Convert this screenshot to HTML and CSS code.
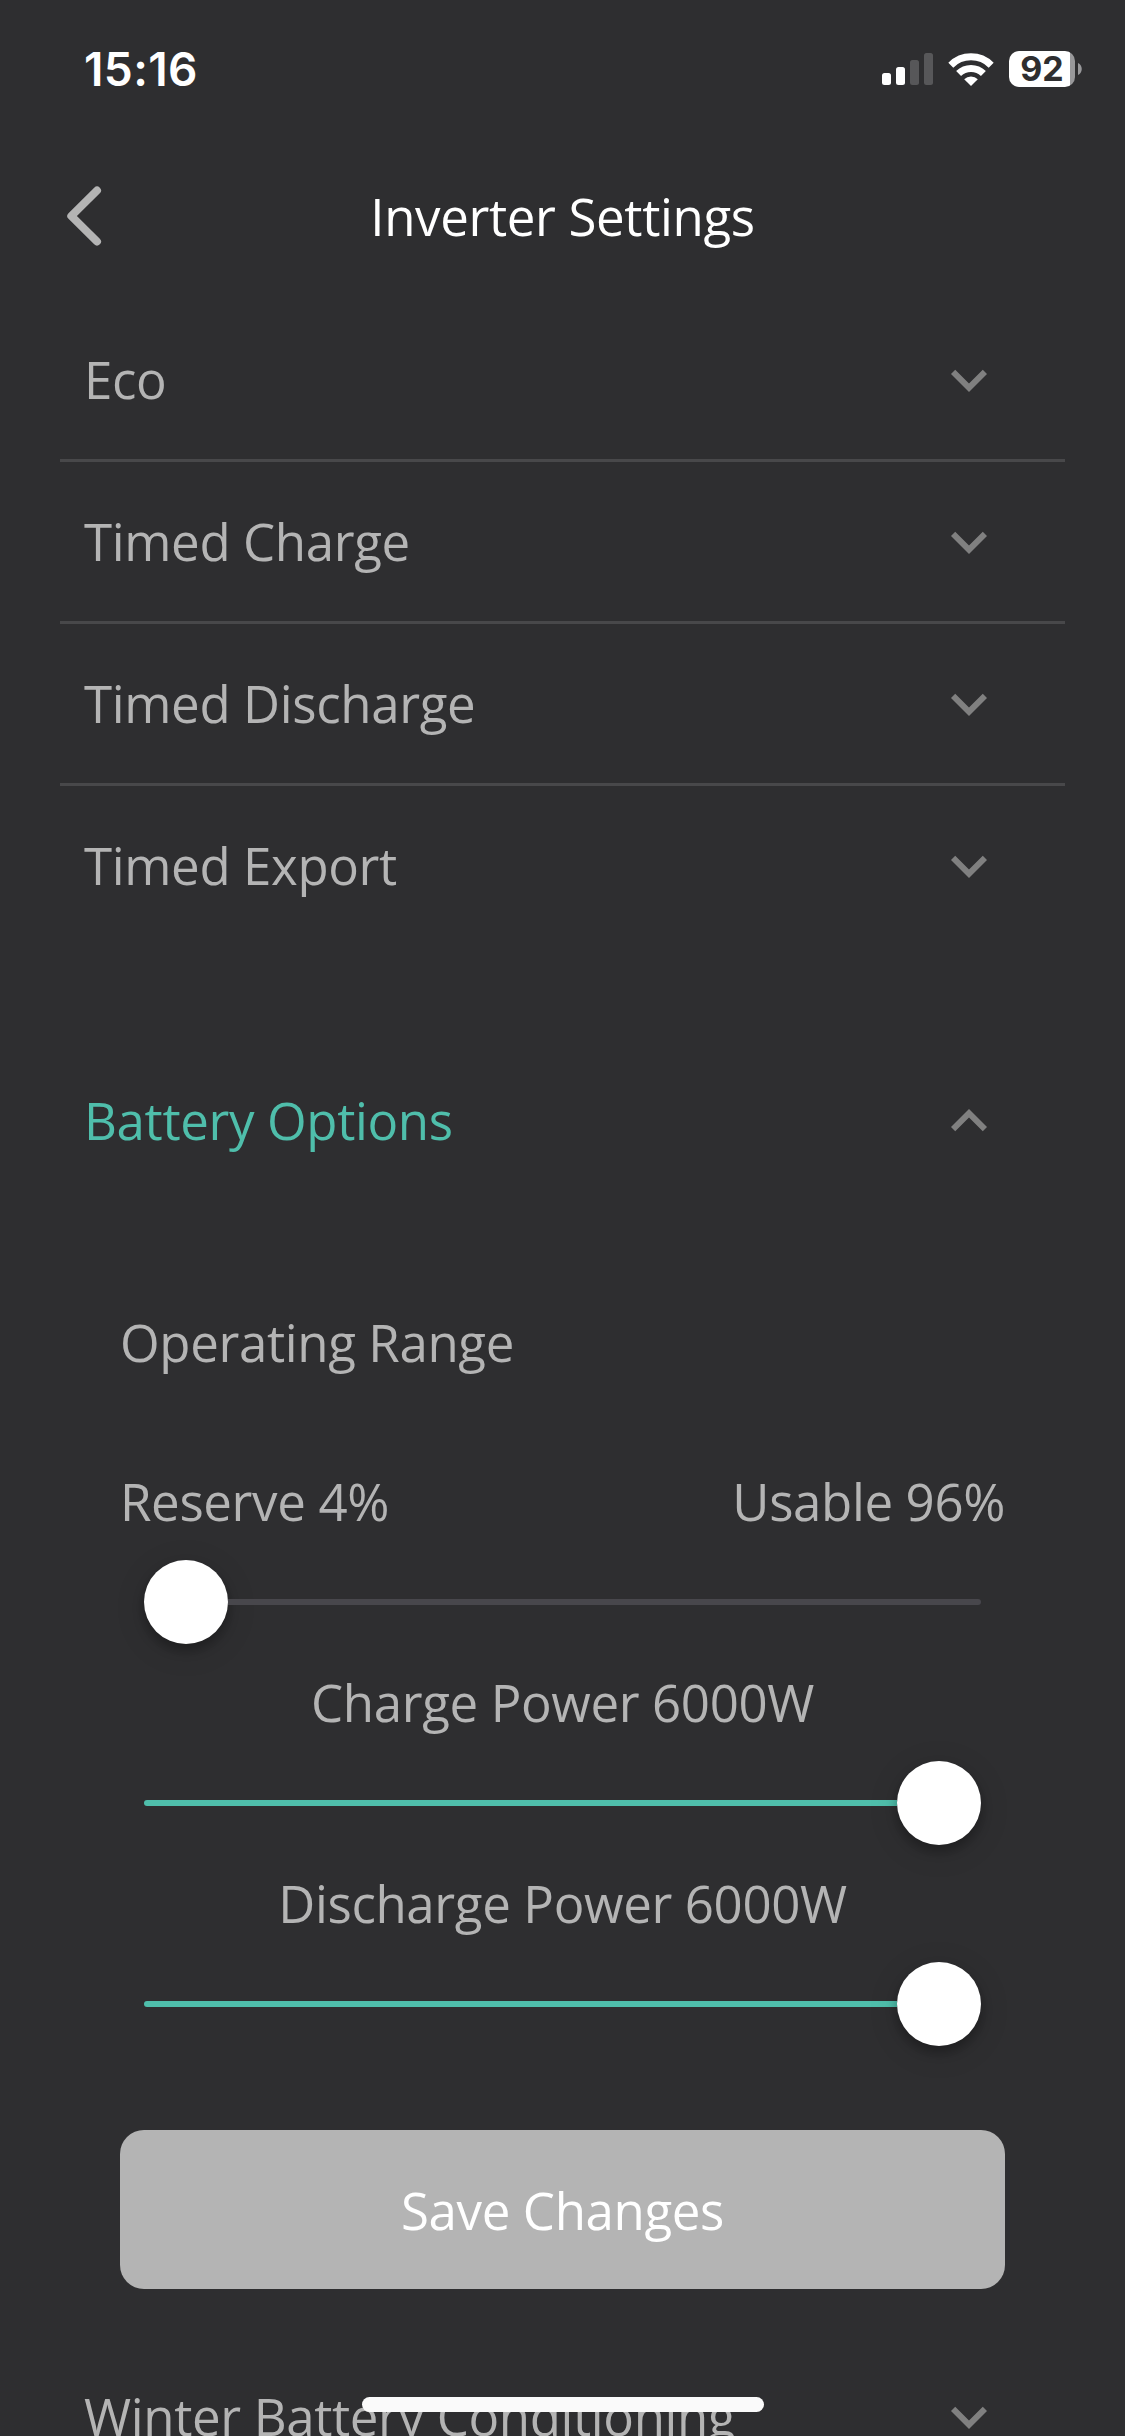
FILE: index.html
```html
<!DOCTYPE html>
<html lang="en">

<head>
    <meta charset="UTF-8">
    <meta name="viewport" content="width=device-width, initial-scale=1.0">
    <title>Inverter Settings</title>
    <link rel="stylesheet" href="styles.css">
</head>

<body>
    <div class="status-bar">
        <span class="time">15:16</span>
        <div class="status-icons">
            <svg class="signal" width="51" height="32" viewBox="0 0 51 32" fill="#fff">
                <rect x="0" y="20" width="9" height="12" rx="2.5" />
                <rect x="14" y="14" width="9" height="18" rx="2.5" />
                <rect x="28" y="7" width="9" height="25" rx="2.5" opacity="0.2" />
                <rect x="42" y="0" width="9" height="32" rx="2.5" opacity="0.2" />
            </svg>
            <svg class="wifi" width="46" height="33" viewBox="0 0 46 33">
                <g fill="none" stroke="#fff" stroke-width="7">
                    <path d="M2.8 12.2a28.6 28.6 0 0 1 40.4 0" />
                    <path d="M10.6 20.6a17.6 17.6 0 0 1 24.8 0" />
                </g>
                <path d="M23 33l-6.8-6.8a9.6 9.6 0 0 1 13.6 0z" fill="#fff" />
            </svg>
            <div class="battery">
                <span class="battery-level">92</span>
            </div>
            <svg class="battery-cap" width="4" height="12" viewBox="0 0 4 12">
                <path d="M0 0c5 2 5 10 0 12z" fill="#98989a" />
            </svg>
        </div>
    </div>

    <div class="header">
        <svg class="back" width="48" height="72" viewBox="0 0 48 72">
            <path d="M37 10.5L11.3 36l25.7 25.5" />
        </svg>
        <h1>Inverter Settings</h1>
    </div>

    <div class="settings">
        <div class="row">
            <span>Eco</span>
            <svg class="chevron" viewBox="0 0 24 24"><path d="M16.59 8.59L12 13.17 7.41 8.59 6 10l6 6 6-6z" /></svg>
        </div>
        <div class="row">
            <span>Timed Charge</span>
            <svg class="chevron" viewBox="0 0 24 24"><path d="M16.59 8.59L12 13.17 7.41 8.59 6 10l6 6 6-6z" /></svg>
        </div>
        <div class="row">
            <span>Timed Discharge</span>
            <svg class="chevron" viewBox="0 0 24 24"><path d="M16.59 8.59L12 13.17 7.41 8.59 6 10l6 6 6-6z" /></svg>
        </div>
        <div class="row last">
            <span>Timed Export</span>
            <svg class="chevron" viewBox="0 0 24 24"><path d="M16.59 8.59L12 13.17 7.41 8.59 6 10l6 6 6-6z" /></svg>
        </div>

        <div class="row last open">
            <span>Battery Options</span>
            <svg class="chevron" viewBox="0 0 24 24"><path d="M12 8l-6 6 1.41 1.41L12 10.83l4.59 4.58L18 14z" /></svg>
        </div>

        <div class="panel">
            <h2>Operating Range</h2>
            <div class="labels">
                <span>Reserve 4%</span>
                <span>Usable 96%</span>
            </div>
            <div class="slider">
                <div class="knob"></div>
                <div class="track"></div>
            </div>
            <div class="labels center">
                <span>Charge Power 6000W</span>
            </div>
            <div class="slider full">
                <div class="track"></div>
                <div class="knob"></div>
            </div>
            <div class="labels center">
                <span>Discharge Power 6000W</span>
            </div>
            <div class="slider full">
                <div class="track"></div>
                <div class="knob"></div>
            </div>
            <button class="btn-save">Save Changes</button>
        </div>

        <div class="row last">
            <span>Winter Battery Conditioning</span>
            <svg class="chevron" viewBox="0 0 24 24"><path d="M16.59 8.59L12 13.17 7.41 8.59 6 10l6 6 6-6z" /></svg>
        </div>
    </div>

    <div class="home-indicator"></div>
</body>

</html>
```
FILE: styles.css
```css
:root {
    --background-color: #2e2e30;
    --text-color: #b4b4b4;
    --accent-color: #4fbeab;
    --line-color: #48484a;
}

* {
    box-sizing: border-box;
}

body {
    font-family: 'Open Sans', sans-serif;
    font-size: 51px;
    font-weight: 400;
    line-height: 70px;
    letter-spacing: -0.36px;
    margin: 0;
    height: 2436px;
    overflow: hidden;
    position: relative;
    background-color: var(--background-color);
    color: var(--text-color);
}

.status-bar {
    display: flex;
    justify-content: space-between;
    align-items: center;
    height: 138px;
    padding: 0 43px 0 84px;
    color: #fff;
    font-family: Inter, sans-serif;
    letter-spacing: 0;
}

.time {
    font-size: 46px;
    font-weight: 600;
    letter-spacing: 0.4px;
}

.status-icons {
    display: flex;
    align-items: center;
}

.wifi {
    margin-left: 15px;
}

.battery {
    width: 66px;
    height: 36px;
    margin-left: 15px;
    border-radius: 10px;
    background: linear-gradient(to right, #fff 61px, #98989a 61px);
    text-align: center;
}

.battery-level {
    display: block;
    color: var(--background-color);
    font-size: 34px;
    font-weight: 700;
    line-height: 36px;
}

.battery-cap {
    margin-left: 3px;
}

.header {
    display: grid;
    grid-template-columns: 48px 1fr 48px;
    align-items: center;
    height: 156px;
    padding: 0 60px;
}

.back path {
    fill: none;
    stroke: var(--text-color);
    stroke-width: 8;
    stroke-linecap: round;
    stroke-linejoin: round;
}

h1,
h2 {
    margin: 0;
    font-size: 51px;
    font-weight: 400;
}

h1 {
    color: #fff;
    text-align: center;
}

.settings {
    padding: 6px 60px 0;
}

.row {
    display: flex;
    justify-content: space-between;
    align-items: center;
    height: 162px;
    padding: 0 60px 0 24px;
    border-bottom: 3px solid var(--line-color);
}

.row span {
    padding-bottom: 1px;
}

.row.last {
    border-bottom: none;
    height: 159px;
}

.row.open {
    margin-top: 96px;
    color: var(--accent-color);
}

.chevron {
    width: 72px;
    height: 72px;
    fill: #808080;
}

.panel {
    padding: 107px 60px 48px;
}

.labels {
    display: flex;
    justify-content: space-between;
    height: 70px;
}

h2 + .labels {
    margin-top: 89px;
}

.labels.center {
    justify-content: center;
    margin-top: 23px;
}

.slider {
    display: flex;
    align-items: center;
    height: 84px;
    margin: 24px 24px 0;
}

.track {
    flex: 1;
    height: 6px;
    border-radius: 0 3px 3px 0;
    background: #48474c;
}

.full .track {
    border-radius: 3px 0 0 3px;
    background: var(--accent-color);
}

.knob {
    width: 84px;
    height: 84px;
    border-radius: 50%;
    background: #fff;
    box-shadow: 0 6px 12px rgba(0, 0, 0, 0.3), 0 6px 36px rgba(0, 0, 0, 0.08);
}

.btn-save {
    display: block;
    width: 100%;
    height: 159px;
    margin-top: 84px;
    border: none;
    border-radius: 24px;
    background: var(--text-color);
    color: #fff;
    font: inherit;
    letter-spacing: inherit;
}

/* floats over the scrolled list */
.home-indicator {
    position: absolute;
    left: 362px;
    bottom: 24px;
    width: 402px;
    height: 15px;
    border-radius: 8px;
    background: #fafafa;
}
```
